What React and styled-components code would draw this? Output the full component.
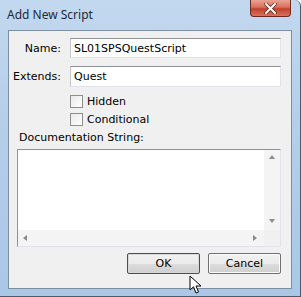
import styled, { createGlobalStyle } from "styled-components";

const GlobalStyle = createGlobalStyle`
  html, body {
    margin: 0;
    padding: 0;
    background: #ffffff;
  }
`;

const Window = styled.div`
  position: relative;
  box-sizing: border-box;
  width: 301px;
  height: 297px;
  display: flex;
  flex-direction: column;
  padding: 0 8px 7px 8px;
  background: linear-gradient(180deg, #c2d8ef 0%, #b5cfea 40%, #aac7e7 100%);
  border-right: 1px solid #4d5a68;
  border-bottom: 1px solid #4d5a68;
  border-top-right-radius: 6px;
  font-family: "DejaVu Sans", sans-serif;
  font-size: 11px;
  color: #000;
`;

const TitleBar = styled.div`
  height: 30px;
  flex: none;
  display: flex;
  justify-content: space-between;
  align-items: flex-start;
`;

const Title = styled.span`
  padding-top: 6px;
  margin-left: -1px;
  font-family: "Noto Sans", sans-serif;
  font-size: 12px;
  color: #1e2a36;
`;

const CloseButton = styled.div`
  width: 41px;
  height: 17px;
  box-sizing: border-box;
  margin-right: 1px;
  display: flex;
  align-items: center;
  justify-content: center;
  border: 1px solid #6b2a22;
  border-top: none;
  border-radius: 0 0 4px 4px;
  background: linear-gradient(180deg, #e8a393 0%, #d8705c 45%, #c2402a 55%, #d8745c 100%);
`;

const Content = styled.div`
  flex: 1;
  display: flex;
  flex-direction: column;
  background: #f0f0f0;
  border: 1px solid #7d8fa3;
  padding: 7px 10px 0 0;
`;

const Field = styled.div`
  display: flex;
  align-items: center;
  margin-bottom: ${(p) => p.$gap}px;
`;

const Label = styled.label`
  width: 52px;
  flex: none;
  text-align: right;
  margin-right: 9px;
`;

const Input = styled.div`
  flex: 1;
  box-sizing: border-box;
  height: ${(p) => p.$h}px;
  display: flex;
  align-items: center;
  padding-left: 3px;
  background: #fff;
  border: 1px solid #e2e3ea;
  border-top-color: #8f9296;
  border-left-color: #c4c6ca;
`;

const CheckRow = styled.div`
  display: flex;
  align-items: center;
  gap: 4px;
  margin-left: 61px;
  height: 13px;
  margin-bottom: 5px;
`;

const Box = styled.span`
  width: 13px;
  height: 13px;
  box-sizing: border-box;
  border: 1px solid #8e8f8f;
  background: linear-gradient(135deg, #e9e9e9 0%, #ffffff 100%);
`;

const DocLabel = styled.div`
  margin: 0 0 5px 10px;
`;

const TextArea = styled.div`
  margin-left: 8px;
  height: 98px;
  box-sizing: border-box;
  display: grid;
  grid-template-columns: 1fr 16px;
  grid-template-rows: 1fr 16px;
  background: #fff;
  border: 1px solid #e2e3ea;
  border-top-color: #8f9296;
  border-left-color: #8f9296;
`;

const ScrollTrack = styled.div`
  background: #f4f4f4;
  display: flex;
  flex-direction: ${(p) => (p.$vertical ? "column" : "row")};
  justify-content: space-between;
  align-items: center;
  padding: ${(p) => (p.$vertical ? "5px 0" : "0 5px")};
  color: #6f6f6f;
  font-size: 7px;
  line-height: 1;
`;

const Corner = styled.div`
  background: #f0f0f0;
`;

const Buttons = styled.div`
  display: flex;
  justify-content: flex-end;
  gap: 8px;
  margin-top: 6px;
`;

const Button = styled.div`
  position: relative;
  width: 73px;
  height: 21px;
  box-sizing: border-box;
  display: flex;
  align-items: center;
  justify-content: center;
  border: 1px solid ${(p) => (p.$default ? "#4d4d4d" : "#707070")};
  border-radius: 2px;
  box-shadow: inset 0 0 0 1px ${(p) => (p.$default ? "#d8d8d8" : "#fcfcfc")};
  background: linear-gradient(180deg, #f2f2f2 0%, #ebebeb 50%, #dddddd 51%, #cfcfcf 100%);
`;

const Cursor = styled.svg`
  position: absolute;
  left: 61px;
  top: 21px;
`;

const Arrow = ({ dir }) => {
  const pts = {
    up: "0,4 3,0 6,4",
    down: "0,0 6,0 3,4",
    left: "4,0 4,6 0,3",
    right: "0,0 0,6 4,3",
  }[dir];
  return (
    <svg width="6" height="6" viewBox="0 0 6 6">
      <polygon points={pts} fill="#8a8a8a" />
    </svg>
  );
};

export default function App() {
  return (
    <>
      <GlobalStyle />
      <Window>
        <TitleBar>
          <Title>Add New Script</Title>
          <CloseButton>
            <svg width="13" height="11" viewBox="0 0 13 11">
              <path d="M2 1 L11 10 M11 1 L2 10" stroke="#5a2318" strokeWidth="3.4" strokeLinecap="round" />
              <path d="M2 1 L11 10 M11 1 L2 10" stroke="#ffffff" strokeWidth="2" strokeLinecap="round" />
            </svg>
          </CloseButton>
        </TitleBar>
        <Content>
          <Field $gap={8}>
            <Label>Name:</Label>
            <Input $h={20}>SL01SPSQuestScript</Input>
          </Field>
          <Field $gap={8}>
            <Label>Extends:</Label>
            <Input $h={21}>Quest</Input>
          </Field>
          <CheckRow>
            <Box />
            <span>Hidden</span>
          </CheckRow>
          <CheckRow>
            <Box />
            <span>Conditional</span>
          </CheckRow>
          <DocLabel>Documentation String:</DocLabel>
          <TextArea>
            <div />
            <ScrollTrack $vertical>
              <Arrow dir="up" />
              <Arrow dir="down" />
            </ScrollTrack>
            <ScrollTrack>
              <Arrow dir="left" />
              <Arrow dir="right" />
            </ScrollTrack>
            <Corner />
          </TextArea>
          <Buttons>
            <Button $default>
              OK
              <Cursor width="14" height="20" viewBox="0 0 14 20">
                <path
                  d="M1 1 L1 15 L4.5 11.8 L7 18 L9.5 17 L7 11 L12 11 Z"
                  fill="#ffffff"
                  stroke="#000000"
                  strokeWidth="1"
                  strokeLinejoin="round"
                />
              </Cursor>
            </Button>
            <Button>Cancel</Button>
          </Buttons>
        </Content>
      </Window>
    </>
  );
}
